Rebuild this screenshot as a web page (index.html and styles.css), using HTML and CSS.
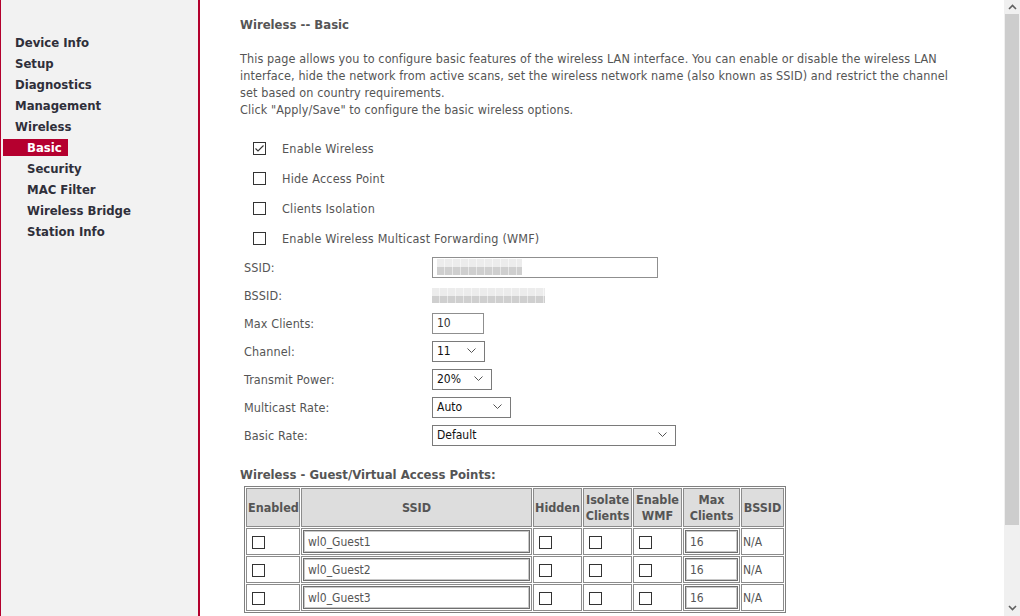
FILE: index.html
```html
<!DOCTYPE html>
<html>
<head>
<meta charset="utf-8">
<link rel="stylesheet" href="styles.css">
</head>
<body>
<div class="sidebar">
  <ul class="menu">
    <li>Device Info</li>
    <li>Setup</li>
    <li>Diagnostics</li>
    <li>Management</li>
    <li>Wireless</li>
    <li class="sub active"><span>Basic</span></li>
    <li class="sub">Security</li>
    <li class="sub">MAC Filter</li>
    <li class="sub">Wireless Bridge</li>
    <li class="sub">Station Info</li>
  </ul>
</div>
<div class="main">
  <div class="title">Wireless -- Basic</div>
  <p class="intro">This page allows you to configure basic features of the wireless LAN interface. You can enable or disable the wireless LAN interface, hide the network from active scans, set the wireless network name (also known as SSID) and restrict the channel set based on country requirements.<br>Click "Apply/Save" to configure the basic wireless options.</p>
  <div class="checks">
    <div class="check"><span class="cb checked"><svg width="11" height="11" viewBox="0 0 11 11"><path d="M1.5 5.5 L4 8 L9.5 2.5" fill="none" stroke="#333" stroke-width="1.1"/></svg></span><span>Enable Wireless</span></div>
    <div class="check"><span class="cb"></span><span>Hide Access Point</span></div>
    <div class="check"><span class="cb"></span><span>Clients Isolation</span></div>
    <div class="check"><span class="cb"></span><span>Enable Wireless Multicast Forwarding (WMF)</span></div>
  </div>
  <div class="form">
    <div class="lbl">SSID:</div>
    <div class="field"><div class="input w-ssid"><span class="blur blur-ssid"></span></div></div>
    <div class="lbl">BSSID:</div>
    <div class="field"><span class="blur blur-bssid"></span></div>
    <div class="lbl">Max Clients:</div>
    <div class="field"><div class="input w-max">10</div></div>
    <div class="lbl">Channel:</div>
    <div class="field"><div class="select w-ch"><span>11</span><svg width="9" height="6" viewBox="0 0 9 6"><path d="M0.5 0.5 L4.5 4.5 L8.5 0.5" fill="none" stroke="#555" stroke-width="1"/></svg></div></div>
    <div class="lbl">Transmit Power:</div>
    <div class="field"><div class="select w-tx"><span>20%</span><svg width="9" height="6" viewBox="0 0 9 6"><path d="M0.5 0.5 L4.5 4.5 L8.5 0.5" fill="none" stroke="#555" stroke-width="1"/></svg></div></div>
    <div class="lbl">Multicast Rate:</div>
    <div class="field"><div class="select w-mc"><span>Auto</span><svg width="9" height="6" viewBox="0 0 9 6"><path d="M0.5 0.5 L4.5 4.5 L8.5 0.5" fill="none" stroke="#555" stroke-width="1"/></svg></div></div>
    <div class="lbl">Basic Rate:</div>
    <div class="field"><div class="select w-br"><span>Default</span><svg width="9" height="6" viewBox="0 0 9 6"><path d="M0.5 0.5 L4.5 4.5 L8.5 0.5" fill="none" stroke="#555" stroke-width="1"/></svg></div></div>
  </div>
  <div class="subtitle">Wireless - Guest/Virtual Access Points:</div>
  <table class="guest">
    <colgroup>
      <col class="c-en"><col class="c-ssid"><col class="c-hid"><col class="c-iso"><col class="c-wmf"><col class="c-max"><col class="c-bssid">
    </colgroup>
    <tr>
      <th>Enabled</th><th>SSID</th><th>Hidden</th><th>Isolate<br>Clients</th><th>Enable<br>WMF</th><th>Max<br>Clients</th><th>BSSID</th>
    </tr>
    <tr>
      <td><span class="cb"></span></td><td><div class="tinput">wl0_Guest1</div></td><td><span class="cb"></span></td><td><span class="cb"></span></td><td><span class="cb"></span></td><td><div class="tinput">16</div></td><td>N/A</td>
    </tr>
    <tr>
      <td><span class="cb"></span></td><td><div class="tinput">wl0_Guest2</div></td><td><span class="cb"></span></td><td><span class="cb"></span></td><td><span class="cb"></span></td><td><div class="tinput">16</div></td><td>N/A</td>
    </tr>
    <tr>
      <td><span class="cb"></span></td><td><div class="tinput">wl0_Guest3</div></td><td><span class="cb"></span></td><td><span class="cb"></span></td><td><span class="cb"></span></td><td><div class="tinput">16</div></td><td>N/A</td>
    </tr>
  </table>
</div>
<div class="scrollbar">
  <div class="arrow up"><svg width="9" height="6" viewBox="0 0 9 6"><path d="M1 5 L4.5 1.5 L8 5" fill="none" stroke="#606060" stroke-width="1.6"/></svg></div>
  <div class="thumb"></div>
  <div class="track"></div>
  <div class="arrow down"><svg width="9" height="6" viewBox="0 0 9 6"><path d="M1 1 L4.5 4.5 L8 1" fill="none" stroke="#606060" stroke-width="1.6"/></svg></div>
</div>
</body>
</html>
```

FILE: styles.css
```css
html, body {
  margin: 0;
  padding: 0;
}
body {
  width: 1020px;
  height: 616px;
  overflow: hidden;
  display: flex;
  background: #fff;
  font-family: "DejaVu Sans Condensed", "DejaVu Sans", sans-serif;
  font-size: 12px;
  color: #555;
}
.sidebar {
  width: 197px;
  flex: none;
  background: #f2f2f2;
  border-left: 1px solid #b3002d;
  border-right: 2px solid #b3002d;
}
.menu {
  list-style: none;
  margin: 0;
  padding: 32px 0 0 0;
}
.menu li {
  height: 21px;
  line-height: 21px;
  padding-left: 14px;
  font-weight: bold;
  font-size: 13px;
  color: #2f2f3a;
  white-space: nowrap;
}
.menu li.sub {
  padding-left: 26px;
}
.menu li.active {
  padding-left: 2px;
  display: flex;
  align-items: center;
}
.menu li.active span {
  display: block;
  width: 41px;
  height: 17px;
  line-height: 17px;
  padding-left: 24px;
  background: #b5002f;
  color: #fff;
}
.main {
  width: 764px;
  flex: none;
  padding-left: 40px;
  overflow: hidden;
}
.title {
  margin-top: 16px;
  height: 18px;
  line-height: 18px;
  font-weight: bold;
  font-size: 13px;
  color: #555;
}
.intro {
  margin: 16px 0 0 0;
  width: 716px;
  font-size: 12.5px;
  letter-spacing: 0.1px;
  line-height: 17px;
  color: #555;
}
.checks {
  margin-top: 15px;
  padding-left: 13px;
  font-size: 12.5px;
  letter-spacing: 0.2px;
}
.check {
  height: 30px;
  display: flex;
  align-items: center;
  gap: 16px;
}
.cb {
  display: inline-flex;
  align-items: center;
  justify-content: center;
  width: 11px;
  height: 11px;
  border: 1px solid #333;
  background: #fff;
  flex: none;
  vertical-align: middle;
}
.form {
  margin-top: 0;
  padding-left: 4px;
  display: grid;
  grid-template-columns: 188px 1fr;
  grid-auto-rows: 28px;
  align-items: center;
}
.lbl {
  font-size: 12.5px;
  letter-spacing: 0.1px;
}
.field {
  display: flex;
  align-items: center;
}
.input {
  box-sizing: border-box;
  height: 21px;
  border: 1px solid #8f8f8f;
  padding: 0 4px;
  display: flex;
  align-items: center;
  color: #333;
  background: #fff;
}
.w-ssid { width: 226px; }
.w-max { width: 52px; }
.blur {
  display: block;
  background:
    repeating-linear-gradient(90deg, transparent 0 7px, rgba(255,255,255,0.5) 7px 8px),
    linear-gradient(to bottom, #ececec 0 50%, #cfcfcf 50% 100%);
}
.blur-ssid {
  width: 85px;
  height: 16px;
}
.blur-bssid {
  width: 113px;
  height: 15px;
}
.select {
  box-sizing: border-box;
  height: 21px;
  border: 1px solid #7a7a7a;
  padding: 0 8px 0 4px;
  display: flex;
  align-items: center;
  justify-content: space-between;
  color: #111;
  background: #fff;
}
.w-ch { width: 53px; }
.w-tx { width: 60px; }
.w-mc { width: 79px; }
.w-br { width: 244px; }
.subtitle {
  margin-top: 17px;
  height: 18px;
  line-height: 18px;
  font-weight: bold;
  font-size: 13px;
  color: #555;
}
.guest {
  margin: 2px 0 0 4px;
  border: 1px solid #808080;
  border-collapse: separate;
  border-spacing: 1px;
  width: 542px;
  table-layout: fixed;
}
.guest th, .guest td {
  border: 1px solid #8c8c8c;
  padding: 0 1px;
  vertical-align: middle;
}
.guest th {
  background: #dddddd;
  height: 37px;
  font-weight: bold;
  font-size: 12.5px;
  line-height: 16px;
  color: #555;
  text-align: center;
}
.guest td {
  height: 25px;
  color: #555;
}
.guest td .cb {
  margin-left: 4px;
  margin-top: 1px;
}
.c-en { width: 54px; }
.c-ssid { width: 231px; }
.c-hid { width: 49px; }
.c-iso { width: 49px; }
.c-wmf { width: 49px; }
.c-max { width: 57px; }
.c-bssid { width: 43px; }
.tinput {
  box-sizing: border-box;
  height: 23px;
  border: 1px solid #6f6f6f;
  box-shadow: inset 0 0 0 1px #c8c8c8;
  padding: 0 4px;
  display: flex;
  align-items: center;
  color: #555;
  background: #fff;
}
.scrollbar {
  width: 16px;
  flex: none;
  background: #f0f0f0;
  display: flex;
  flex-direction: column;
}
.arrow {
  height: 14px;
  flex: none;
  display: flex;
  align-items: center;
  justify-content: center;
}
.thumb {
  height: 511px;
  margin: 0 1px;
  background: #cdcdcd;
  flex: none;
}
.track {
  flex: 1;
}
.arrow.down {
  height: 17px;
}
```
